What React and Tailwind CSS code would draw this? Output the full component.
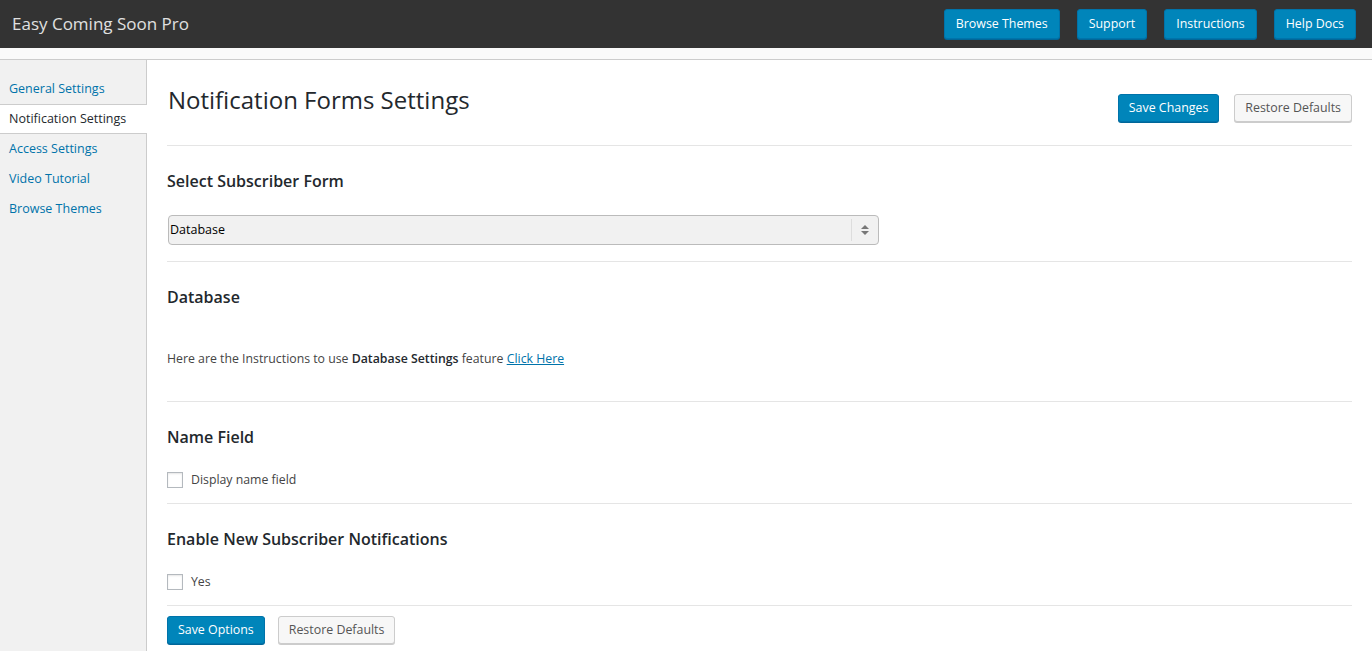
import React from 'react'

const font = { fontFamily: '"Open Sans", "Noto Sans", sans-serif' }

function TopButton({ children }) {
    return (
        <button className="h-[30px] px-[11px] rounded-[3px] bg-[#0085ba] border border-[#0073aa] text-white text-[12.4px] shadow-[0_1px_0_#006799]">
            {children}
        </button>
    )
}

function PrimaryButton({ children }) {
    return (
        <button className="h-[28px] px-[10px] rounded-[3px] bg-[#0085ba] border border-[#0073aa] text-white text-[12.4px] shadow-[0_1px_0_#006799]">
            {children}
        </button>
    )
}

function SecondaryButton({ children }) {
    return (
        <button className="h-[28px] px-[10px] rounded-[3px] bg-[#f7f7f7] border border-[#cccccc] text-[#555] text-[12.4px] shadow-[0_1px_0_#cccccc]">
            {children}
        </button>
    )
}

function Checkbox({ label }) {
    return (
        <label className="flex items-center gap-[8px] text-[12.3px] text-[#444]">
            <span className="w-[16px] h-[16px] border border-[#b4b9be] bg-white shadow-[inset_0_1px_2px_rgba(0,0,0,0.1)]" />
            {label}
        </label>
    )
}

export default function App() {
    const navItems = ['General Settings', 'Notification Settings', 'Access Settings', 'Video Tutorial', 'Browse Themes']

    return (
        <div className="w-[1372px] h-[651px] overflow-hidden bg-white" style={font}>
            {/* Header */}
            <div className="h-[48px] bg-[#333333] flex items-center justify-between pl-[12px] pr-[16px]">
                <div className="text-[17px] text-[#e0e0e0]">Easy Coming Soon Pro</div>
                <div className="flex gap-[17px]">
                    <TopButton>Browse Themes</TopButton>
                    <TopButton>Support</TopButton>
                    <TopButton>Instructions</TopButton>
                    <TopButton>Help Docs</TopButton>
                </div>
            </div>
            <div className="h-[12px] bg-[#fafafa] border-b border-[#cccccc]" />

            <div className="flex h-[591px]">
                {/* Sidebar */}
                <div className="w-[147px] bg-[#f1f1f1] border-r border-[#cccccc] pt-[14px] text-[12.5px]">
                    {navItems.map((item, i) => (
                        <div
                            key={item}
                            className={
                                i === 1
                                    ? 'h-[30px] flex items-center px-[9px] bg-white text-[#23282d] border-y border-[#cccccc] -mr-px'
                                    : 'h-[30px] flex items-center px-[9px] text-[#0073aa]'
                            }
                        >
                            {item}
                        </div>
                    ))}
                </div>

                {/* Main */}
                <div className="flex-1 pl-[20px] pr-[20px]">
                    <div className="flex items-start justify-between pt-[25px] pl-px h-[86px] border-b border-[#e5e5e5]">
                        <h1 className="text-[24px] text-[#23282d] font-normal leading-[30px]">Notification Forms Settings</h1>
                        <div className="flex gap-[15px] pt-[9px]">
                            <PrimaryButton>Save Changes</PrimaryButton>
                            <SecondaryButton>Restore Defaults</SecondaryButton>
                        </div>
                    </div>

                    <div className="h-[116px] border-b border-[#e5e5e5] pt-[24px]">
                        <h2 className="text-[16px] font-semibold text-[#23282d] leading-[22px]">Select Subscriber Form</h2>
                        <div className="mt-[23px] ml-px w-[711px] h-[30px] rounded-[4px] border border-[#bbbbbb] bg-[#f1f1f1] flex items-center text-[12.5px] text-black">
                            <span className="flex-1 pl-[1px] pt-[1px]">Database</span>
                            <span className="w-[27px] h-[22px] border-l border-[#dddddd] flex items-center justify-center">
                                <svg width="8" height="10" viewBox="0 0 8 10">
                                    <path d="M4 0 L8 4 H0 Z" fill="#777" />
                                    <path d="M0 6 H8 L4 10 Z" fill="#777" />
                                </svg>
                            </span>
                        </div>
                    </div>

                    <div className="h-[140px] border-b border-[#e5e5e5] pt-[24px]">
                        <h2 className="text-[16px] font-semibold text-[#23282d] leading-[22px]">Database</h2>
                        <p className="mt-[42px] text-[12.3px] text-[#444]">
                            Here are the Instructions to use <b className="font-semibold text-[#23282d]">Database Settings</b> feature{' '}
                            <a className="text-[#0073aa] underline">Click Here</a>
                        </p>
                    </div>

                    <div className="h-[102px] border-b border-[#e5e5e5] pt-[24px]">
                        <h2 className="text-[16px] font-semibold text-[#23282d] leading-[22px]">Name Field</h2>
                        <div className="mt-[23px]">
                            <Checkbox label="Display name field" />
                        </div>
                    </div>

                    <div className="h-[102px] border-b border-[#e5e5e5] pt-[24px]">
                        <h2 className="text-[16px] font-semibold text-[#23282d] leading-[22px]">Enable New Subscriber Notifications</h2>
                        <div className="mt-[23px]">
                            <Checkbox label="Yes" />
                        </div>
                    </div>

                    <div className="flex gap-[13px] pt-[10px]">
                        <PrimaryButton>Save Options</PrimaryButton>
                        <SecondaryButton>Restore Defaults</SecondaryButton>
                    </div>
                </div>
            </div>
        </div>
    )
}
